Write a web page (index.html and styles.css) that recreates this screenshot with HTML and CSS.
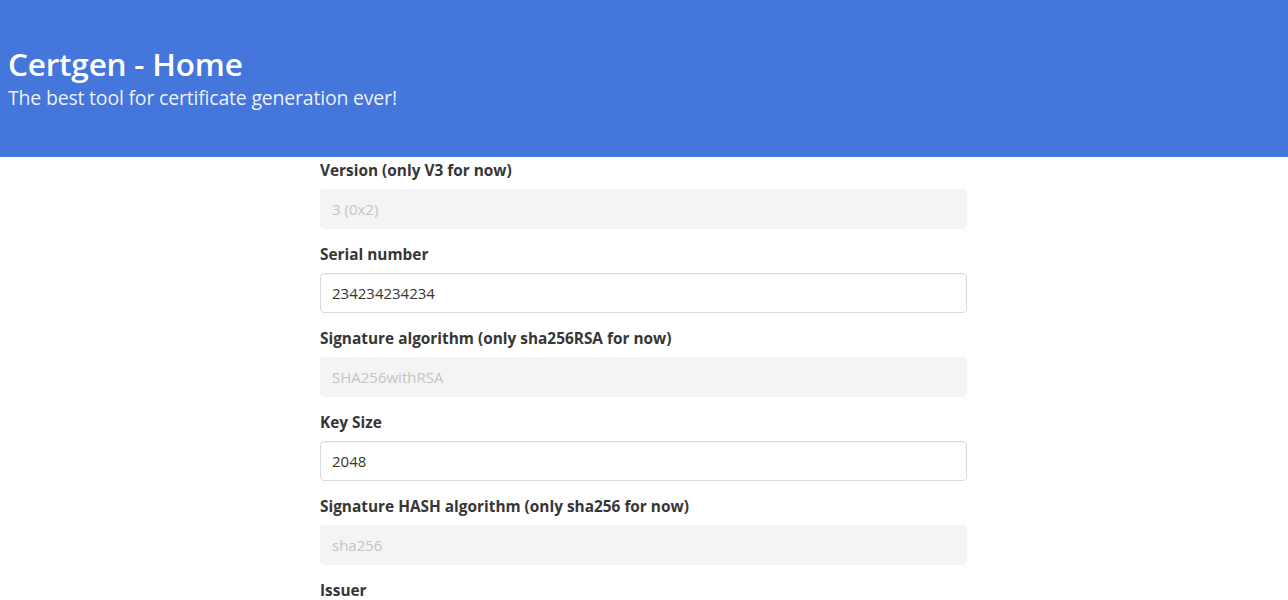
FILE: index.html
```html
<!DOCTYPE html>
<html lang="en">
<head>
<meta charset="utf-8">
<title>Certgen - Home</title>
<link rel="stylesheet" href="styles.css">
</head>
<body>
<section class="hero">
  <div class="hero-body">
    <h1 class="title">Certgen - Home</h1>
    <h2 class="subtitle">The best tool for certificate generation ever!</h2>
  </div>
</section>
<main class="form-col">
  <div class="field">
    <label class="label">Version (only V3 for now)</label>
    <input class="input" type="text" value="3 (0x2)" disabled>
  </div>
  <div class="field">
    <label class="label">Serial number</label>
    <input class="input" type="text" value="234234234234">
  </div>
  <div class="field">
    <label class="label">Signature algorithm (only sha256RSA for now)</label>
    <input class="input" type="text" value="SHA256withRSA" disabled>
  </div>
  <div class="field">
    <label class="label">Key Size</label>
    <input class="input" type="text" value="2048">
  </div>
  <div class="field">
    <label class="label">Signature HASH algorithm (only sha256 for now)</label>
    <input class="input" type="text" value="sha256" disabled>
  </div>
  <div class="field">
    <label class="label">Issuer</label>
    <input class="input" type="text" value="">
  </div>
</main>
</body>
</html>
```
FILE: styles.css
```css
* { box-sizing: border-box; }
html, body { margin: 0; padding: 0; }
body {
  font-family: "Open Sans", "Noto Sans", "DejaVu Sans", sans-serif;
  color: #363636;
  background: #fff;
  font-size: 16px;
}
.hero {
  background: #4476dc;
  color: #fff;
}
.hero-body {
  height: 157px;
  padding: 45px 8px 0;
}
.title {
  margin: 0;
  font-size: 31.5px;
  font-weight: 600;
  line-height: 38px;
  letter-spacing: -0.2px;
}
.subtitle {
  margin: 2px 0 0;
  font-size: 19.5px;
  font-weight: 400;
  line-height: 26px;
  color: rgba(255,255,255,0.92);
  letter-spacing: -0.2px;
}
.form-col {
  width: 647px;
  margin: 0 0 0 calc(50% - 324px);
}
.field {
  display: flex;
  flex-direction: column;
  margin-bottom: 12px;
}
.label {
  font-size: 15.4px;
  font-weight: 700;
  line-height: 24px;
  padding-top: 2px;
  margin-bottom: 6px;
  color: #363636;
}
.input {
  height: 40px;
  width: 100%;
  font-family: inherit;
  font-size: 15px;
  color: #363636;
  background: #fff;
  border: 1px solid #dbdbdb;
  border-radius: 4px;
  padding: 0 11px;
  box-shadow: inset 0 1px 2px rgba(10,10,10,0.05);
  outline: none;
}
.input:disabled {
  background: #f4f4f4;
  border-color: #f4f4f4;
  color: #c4c4c4;
  box-shadow: none;
}
```
